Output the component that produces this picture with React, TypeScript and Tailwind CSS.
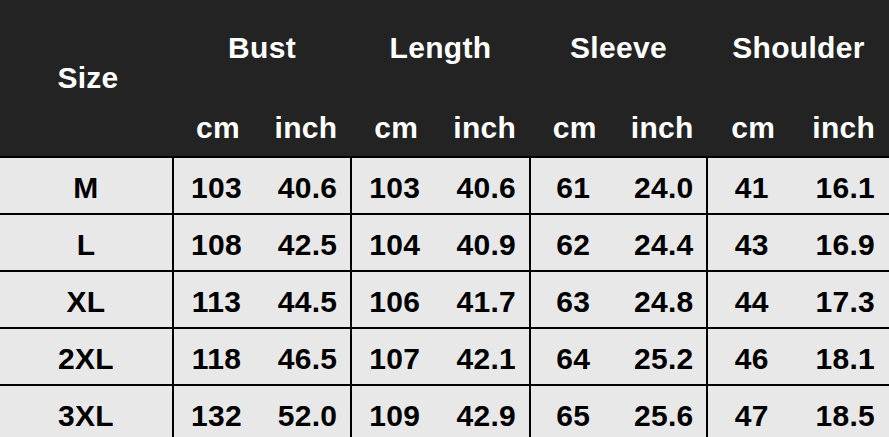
import React from "react";

const rows = [
  ["M", "103", "40.6", "103", "40.6", "61", "24.0", "41", "16.1"],
  ["L", "108", "42.5", "104", "40.9", "62", "24.4", "43", "16.9"],
  ["XL", "113", "44.5", "106", "41.7", "63", "24.8", "44", "17.3"],
  ["2XL", "118", "46.5", "107", "42.1", "64", "25.2", "46", "18.1"],
  ["3XL", "132", "52.0", "109", "42.9", "65", "25.6", "47", "18.5"],
];

const groups = [
  { title: "Bust", w: "w-[178px]" },
  { title: "Length", w: "w-[179px]" },
  { title: "Sleeve", w: "w-[177px]" },
  { title: "Shoulder", w: "flex-1" },
];

export default function App() {
  return (
    <div
      className="w-[889px] h-[437px] overflow-hidden bg-[#e8e8e8] text-[30px] font-bold leading-none tracking-[0.3px]"
      style={{ fontFamily: '"Liberation Sans", Arial, sans-serif' }}
    >
      <div className="flex h-[156px] bg-[#232323] text-white">
        <div className="w-[172px] flex items-center justify-center pl-[4px]">Size</div>
        {groups.map((g) => (
          <div key={g.title} className={`${g.w} flex flex-col pl-[2px]`}>
            <div className="h-[94px] flex items-center justify-center pt-[2px]">{g.title}</div>
            <div className="flex-1 flex pt-[6px]">
              <div className="flex-1 flex items-center justify-center">cm</div>
              <div className="flex-1 flex items-center justify-center">inch</div>
            </div>
          </div>
        ))}
      </div>
      <div className="border-t-2 border-black">
        {rows.map((r, i) => (
          <div key={i} className="flex h-[57px] border-b-2 border-black text-black">
            <div className="w-[172px] flex items-center justify-center pt-[4px]">{r[0]}</div>
            {groups.map((g, j) => (
              <div key={g.title} className={`${g.w} flex border-l-2 border-black pt-[4px]`}>
                <div className="flex-1 flex items-center justify-center pr-[6px]">{r[1 + j * 2]}</div>
                <div className="flex-1 flex items-center justify-center">{r[2 + j * 2]}</div>
              </div>
            ))}
          </div>
        ))}
      </div>
    </div>
  );
}
